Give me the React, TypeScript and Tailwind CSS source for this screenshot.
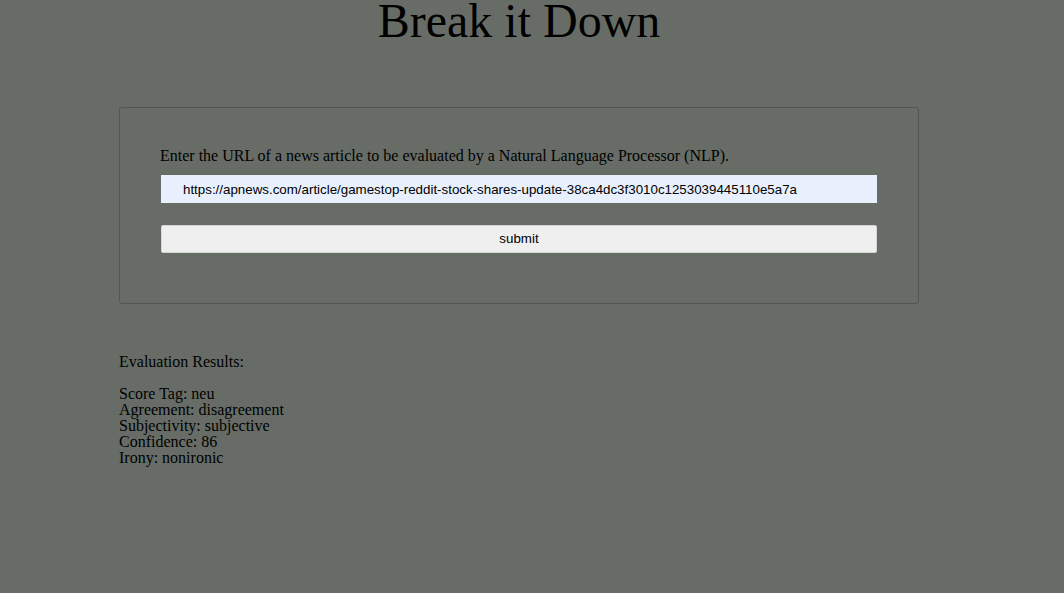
import React from 'react';

const results = [
  ['Score Tag', 'neu'],
  ['Agreement', 'disagreement'],
  ['Subjectivity', 'subjective'],
  ['Confidence', '86'],
  ['Irony', 'nonironic'],
];

export default function App() {
  return (
    <div className="min-h-[593px] w-full bg-[#676d66] text-black font-['Liberation_Serif',serif]">
      <div className="ml-[119px] w-[800px]">
        <h1 className="text-center text-[48px] leading-[41px] font-normal">Break it Down</h1>

        {/* form box */}
        <form
          className="mt-[66px] h-[197px] rounded-[3px] border border-[#53574f] pl-[41px] pr-[40px] pt-[39px]"
          onSubmit={(e) => e.preventDefault()}
        >
          <p className="-ml-px text-[16px] leading-[18px]">
            Enter the URL of a news article to be evaluated by a Natural Language Processor (NLP).
          </p>
          <input
            type="text"
            className="mt-[10px] block h-[28px] w-[716px] bg-[#e8f0fe] pl-[22px] text-[13.33px] font-['Liberation_Sans',Arial,sans-serif] text-black outline-none"
            defaultValue="https://apnews.com/article/gamestop-reddit-stock-shares-update-38ca4dc3f3010c1253039445110e5a7a"
          />
          <button
            type="submit"
            className="mt-[22px] block h-[28px] w-[716px] rounded-[2px] border border-[#d6d6d6] bg-[#efefef] text-[13.33px] font-['Liberation_Sans',Arial,sans-serif] text-black"
          >
            submit
          </button>
        </form>

        <div className="mt-[49px]">
          <p className="text-[16px] leading-[18px]">Evaluation Results:</p>
          <div className="mt-[15px] text-[16px] leading-[16px]">
            {results.map(([label, value]) => (
              <div key={label}>
                {label}: {value}
              </div>
            ))}
          </div>
        </div>
      </div>
    </div>
  );
}
